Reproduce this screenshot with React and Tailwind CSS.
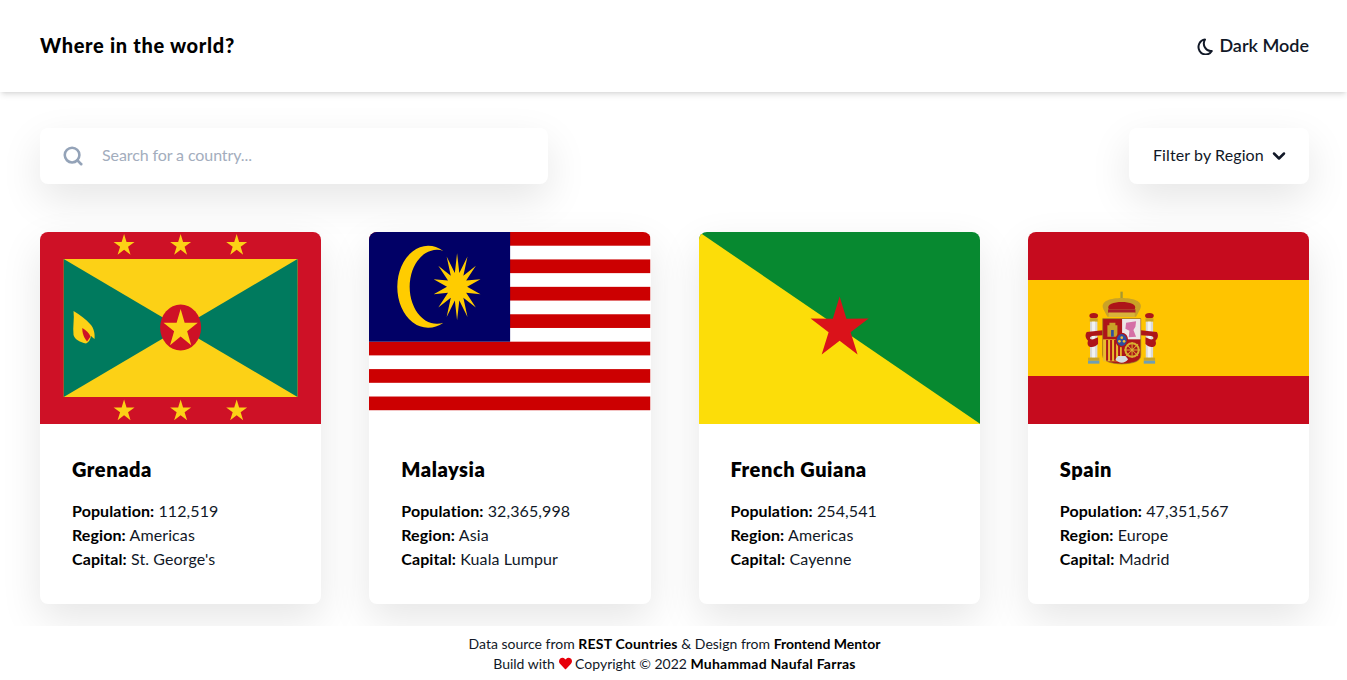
import { Search, ChevronDown } from "lucide-react";
import { FaHeart } from "react-icons/fa";

const starPoints = (cx, cy, rx, ry, inner, n = 5) => {
    const pts = [];
    for (let i = 0; i < n * 2; i++) {
        const r = i % 2 === 0 ? 1 : inner;
        const a = (Math.PI * i) / n - Math.PI / 2;
        pts.push(`${(cx + rx * r * Math.cos(a)).toFixed(2)},${(cy + ry * r * Math.sin(a)).toFixed(2)}`);
    }
    return pts.join(" ");
};

function Flag({ children }) {
    return (
        <svg viewBox="0 0 281 192" preserveAspectRatio="none" className="block w-full h-[192px]">
            {children}
        </svg>
    );
}

function Grenada() {
    const red = "#CE1126";
    const yellow = "#FCD116";
    const green = "#007A5E";
    return (
        <Flag>
            <rect width="281" height="192" fill={red} />
            <rect x="23.7" y="27" width="233.6" height="138" fill={yellow} />
            <polygon points="23.7,27 140.5,96 23.7,165" fill={green} />
            <polygon points="257.3,27 140.5,96 257.3,165" fill={green} />
            <ellipse cx="140.5" cy="95.5" rx="20.5" ry="23" fill={red} />
            <polygon points={starPoints(140.5, 97, 18, 20, 0.38)} fill={yellow} />
            {[84, 140.5, 196.5].map((x) => (
                <polygon key={x} points={starPoints(x, 13.5, 11, 11.5, 0.38)} fill={yellow} />
            ))}
            {[84, 140.5, 196.5].map((x) => (
                <polygon key={x} points={starPoints(x, 179, 11, 11.5, 0.38)} fill={yellow} />
            ))}
            <path d="M33.5 79 C40 83 46 87 50 92 C54 96 55 102 54.5 107 C53 106 52 105 51 104 C50 108 49 110 46 111.5 C40 110 35 108 33.5 103 C32.5 95 34.5 87 33.5 79 Z" fill={yellow} />
            <path d="M42.3 96 C46 98 49 101 50.5 104.5 L47 109.5 C44 106 42 101 42.3 96 Z" fill={red} />
        </Flag>
    );
}

function Malaysia() {
    const stripes = [0, 2, 4, 6, 8, 10, 12];
    return (
        <Flag>
            <rect width="281" height="192" fill="#fff" />
            {stripes.map((i) => (
                <rect key={i} y={i * 13.71} width="281" height="13.71" fill="#CC0001" />
            ))}
            <rect width="141" height="109.7" fill="#010066" />
            <path d="M74.3 19 A31 41 0 1 0 74.3 90.7 A27 37 0 1 1 74.3 19 Z" fill="#FFCC00" />
            <polygon points={starPoints(88, 54.7, 24, 33.5, 0.42, 14)} fill="#FFCC00" />
        </Flag>
    );
}

function FrenchGuiana() {
    return (
        <Flag>
            <rect width="281" height="192" fill="#078930" />
            <polygon points="0,0 281,192 0,192" fill="#FCDD09" />
            <polygon points={starPoints(140.5, 96.5, 30.5, 32, 0.38)} fill="#DA121A" />
        </Flag>
    );
}

function Spain() {
    const gold = "#C9A227";
    const red = "#AD1519";
    return (
        <Flag>
            <rect width="281" height="192" fill="#C60B1E" />
            <rect y="48" width="281" height="96" fill="#FFC400" />
            {/* coat of arms, coords taken from the 3x crop */}
            <g transform="translate(42 48) scale(0.3333)" className="blur-[0.5px]">
                {[71, 238].map((x) => (
                    <g key={x}>
                        <ellipse cx={x} cy="107" rx="13" ry="8" fill={red} />
                        <rect x={x - 12} y="115" width="24" height="10" fill={gold} />
                        <rect x={x - 11} y="125" width="22" height="108" fill="#D9D9D9" />
                        <rect x={x - 5} y="125" width="9" height="108" fill="#F2F2F2" />
                        <rect x={x - 17} y="233" width="34" height="9" fill={gold} />
                        <rect x={x - 17} y="242" width="34" height="9" fill="#6E9FB5" />
                    </g>
                ))}
                {/* ribbons */}
                <path d="M50 156 L98 151 L98 166 L66 168 C56 172 58 180 70 178 L84 172 L84 192 C70 208 46 202 54 182 C46 176 44 164 50 156 Z" fill={red} />
                <path d="M260 156 L212 151 L212 166 L244 168 C254 172 252 180 240 178 L226 172 L226 192 C240 208 264 202 256 182 C264 176 266 164 260 156 Z" fill={red} />
                {/* crown */}
                <rect x="151" y="35" width="7" height="28" fill="#A8982F" />
                <path d="M112 110 L100 88 C88 62 125 54 155 54 C185 54 222 62 210 88 L198 110 Z" fill={gold} />
                <path d="M116 88 C108 72 132 66 155 66 C178 66 202 72 194 88 Z" fill={red} />
                <rect x="114" y="88" width="82" height="10" fill="#A8202A" />
                <rect x="116" y="98" width="78" height="13" fill="#D9B33A" />
                {/* shield */}
                <path d="M98 116 H212 V225 C212 245 190 250 155 252 C120 250 98 245 98 225 Z" fill={red} stroke="#8C7A2A" strokeWidth="2" />
                <rect x="156" y="117" width="55" height="61" fill="#EDE6E6" />
                <rect x="99" y="178" width="56" height="66" fill="#E9BC2F" />
                <path d="M112 170 V136 H118 V128 H136 V136 H142 V170 Z" fill={gold} />
                <rect x="123" y="150" width="8" height="20" fill="#2D4F9E" />
                <path d="M168 128 L198 124 L196 140 L190 150 L198 170 L176 172 L178 152 L166 146 Z" fill="#D56FA6" />
                {[108, 120, 132, 144].map((x) => (
                    <rect key={x} x={x} y="180" width="6" height="62" fill={red} />
                ))}
                <circle cx="186" cy="210" r="20" fill="none" stroke="#D9AE30" strokeWidth="6" />
                <path d="M168 192 L204 228 M204 192 L168 228 M186 186 V234 M162 210 H210" stroke="#D9AE30" strokeWidth="3" />
                <path d="M136 238 C145 252 165 252 174 238 L166 228 L144 228 Z" fill="#D5DCE0" />
                <ellipse cx="155" cy="180" rx="17" ry="20" fill="#2D4F9E" stroke={red} strokeWidth="4" />
                <circle cx="155" cy="173" r="4" fill="#EBC13A" />
                <circle cx="148" cy="184" r="4" fill="#EBC13A" />
                <circle cx="162" cy="184" r="4" fill="#EBC13A" />
            </g>
        </Flag>
    );
}

const countries = [
    { name: "Grenada", population: "112,519", region: "Americas", capital: "St. George's", flag: <Grenada /> },
    { name: "Malaysia", population: "32,365,998", region: "Asia", capital: "Kuala Lumpur", flag: <Malaysia /> },
    { name: "French Guiana", population: "254,541", region: "Americas", capital: "Cayenne", flag: <FrenchGuiana /> },
    { name: "Spain", population: "47,351,567", region: "Europe", capital: "Madrid", flag: <Spain /> },
];

function CountryCard({ country }) {
    return (
        <div className="bg-white rounded-lg overflow-hidden shadow-[0_15px_40px_rgba(0,0,0,0.1)]">
            {country.flag}
            <div className="p-8 pb-[33px] tracking-[0.1px]">
                <h2 className="text-xl leading-[27px] font-extrabold text-black mb-4 tracking-[0.55px]">{country.name}</h2>
                <p><span className="font-bold text-black">Population:</span> {country.population}</p>
                <p><span className="font-bold text-black">Region:</span> {country.region}</p>
                <p><span className="font-bold text-black">Capital:</span> {country.capital}</p>
            </div>
        </div>
    );
}

export default function App() {
    return (
        <div className="bg-white text-[#111827] font-['Lato',sans-serif] min-h-[680px]">
            <header className="h-[92px] bg-white shadow-md flex items-center justify-between pl-10 pr-[38px]">
                <h1 className="text-xl font-black text-black tracking-[0.68px] pb-0.5">Where in the world?</h1>
                <button className="flex items-center gap-1.5 text-lg font-semibold text-[#111827]">
                    <svg width="16" height="17" viewBox="0 0 16 17" fill="none" stroke="currentColor" strokeWidth="2" strokeLinejoin="round">
                        <path d="M8 1.5 A7.2 7.5 0 1 0 14.8 13 A7 7.5 0 0 1 8 1.5 Z" />
                    </svg>
                    <span className="pb-0.5">Dark Mode</span>
                </button>
            </header>

            <main className="pl-10 pr-[38px] pt-9 pb-[22px]">
                <div className="flex items-center justify-between mb-12">
                    <div className="w-[508px] h-14 bg-white rounded-lg shadow-[0_15px_40px_rgba(0,0,0,0.1)] flex items-center gap-[18px] pl-[22px]">
                        <Search size={22} strokeWidth={2.8} className="text-[#94a3b8]" />
                        <span className="text-[#a3adbd] pb-0.5 tracking-[-0.1px]">Search for a country...</span>
                    </div>
                    <button className="h-14 w-[180px] bg-white rounded-lg shadow-[0_15px_40px_rgba(0,0,0,0.1)] flex items-center gap-[5px] pl-6">
                        <span className="pb-0.5 tracking-[0.1px]">Filter by Region</span>
                        <ChevronDown size={20} strokeWidth={3} />
                    </button>
                </div>

                <div className="grid grid-cols-4 gap-12">
                    {countries.map((c) => (
                        <CountryCard key={c.name} country={c} />
                    ))}
                </div>
            </main>

            <footer className="relative bg-white h-[54px] pt-2 pl-[2px] text-sm text-center">
                <p>Data source from <b className="font-bold text-black tracking-[0.2px]">REST Countries</b> &amp; Design from <b className="font-bold text-black">Frontend Mentor</b></p>
                <p>Build with <FaHeart className="inline text-red-600 align-[-1px]" size={13} /> Copyright © 2022 <b className="font-bold text-black tracking-[0.23px]">Muhammad Naufal Farras</b></p>
            </footer>
        </div>
    );
}
